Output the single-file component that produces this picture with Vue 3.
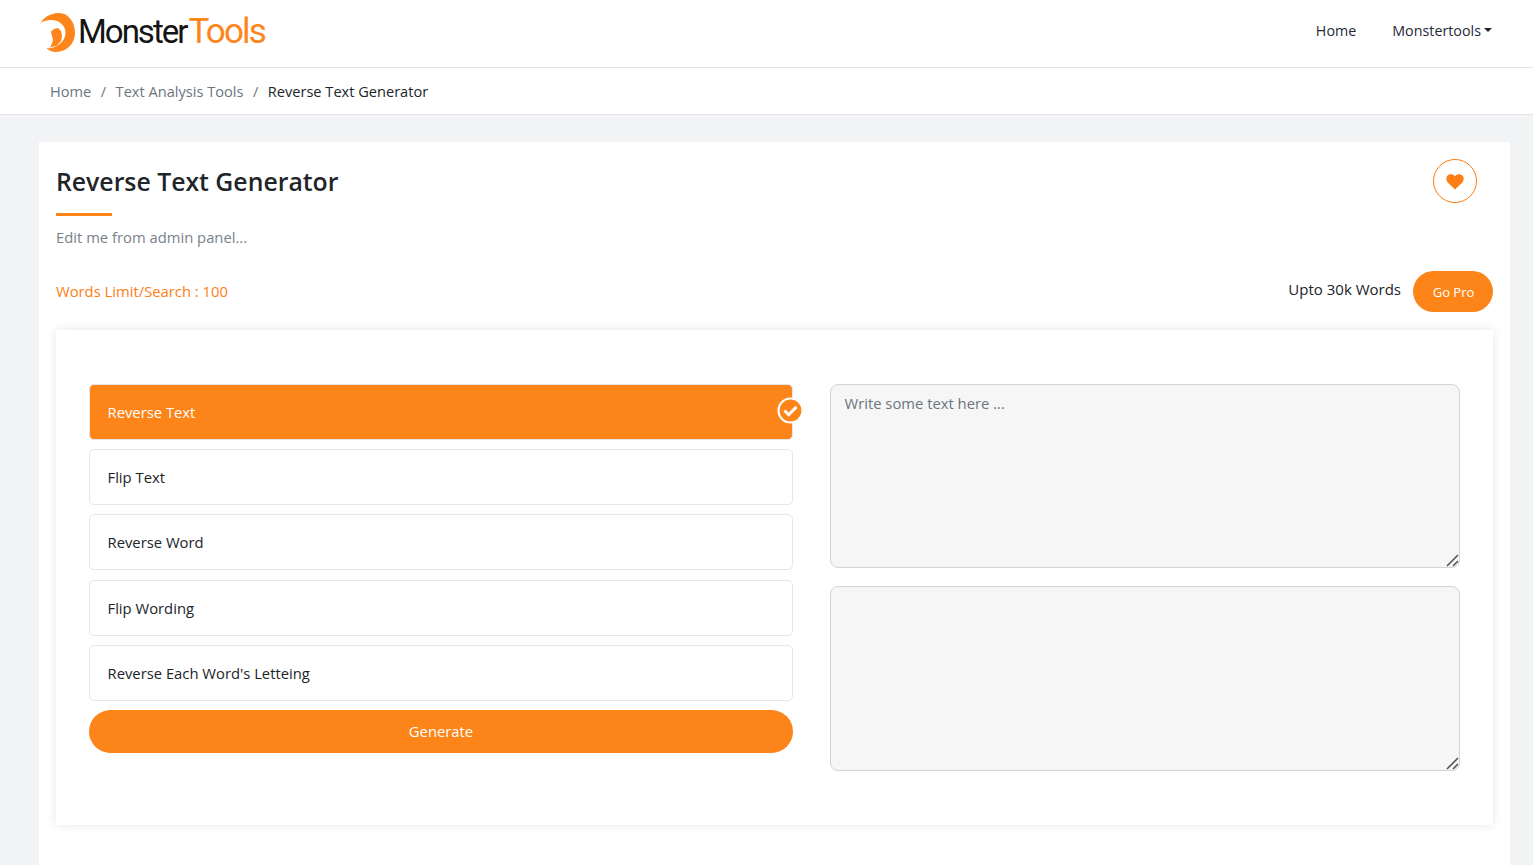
<script setup>
import { ref } from 'vue'
const options = ['Reverse Text', 'Flip Text', 'Reverse Word', 'Flip Wording', "Reverse Each Word's Letteing"]
const selected = ref(0)
</script>

<template>
  <div class="page">
    <header class="navbar">
      <a class="logo">
        <svg class="logo-mark" width="44" height="46" viewBox="0 0 44 46">
          <path fill="#fd851a" d="M3.500 14.500C7 8 14 3 23 3c9.500 0 16 9 16 20 0 10.500-8.500 19-19 19-4 0-7-1.500-9.500-4 4 .5 8-.5 11-2.500 5-3 8-7.500 8-13 0-7-6.500-12.500-14-12.500-4 0-8 1-11.500 3z"/>
          <path fill="#fd851a" d="M15 21.500l3-2.500 4-1 3 3 1 5-1 5-4 4.500-7 2 2-4 1-4-1-3.500z"/>
        </svg>
        <span class="logo-dark">Monster</span><span class="logo-orange">Tools</span>
      </a>
      <nav class="nav-links">
        <a>Home</a>
        <a class="dropdown">Monstertools<i class="caret"></i></a>
      </nav>
    </header>
    <div class="crumbs">
      <a>Home</a><span class="sep">/</span>
      <a>Text Analysis Tools</a><span class="sep">/</span>
      <span class="current">Reverse Text Generator</span>
    </div>
    <main class="content">
      <section class="card">
        <div class="title-row">
          <div>
            <h1>Reverse Text Generator</h1>
            <div class="rule"></div>
            <p class="muted">Edit me from admin panel...</p>
          </div>
          <button class="fav" aria-label="Favourite">
            <svg width="18" height="16" viewBox="0 0 18 16">
              <path fill="#fd7e14" d="M9 15.500 2 8.700C-.2 6.500-.2 3.300 1.600 1.600 3.500-.3 6.500-.2 8.200 1.500L9 2.300l.8-.8c1.700-1.700 4.700-1.800 6.600.1 1.800 1.700 1.800 4.900-.4 7.100z"/>
            </svg>
          </button>
        </div>
        <div class="limit-row">
          <span class="limit">Words Limit/Search : 100</span>
          <div class="pro">
            <span>Upto 30k Words</span>
            <button class="go-pro">Go Pro</button>
          </div>
        </div>
        <div class="tool">
          <div class="options">
            <div
              v-for="(o, i) in options"
              :key="o"
              class="option"
              :class="{ active: selected === i }"
              @click="selected = i"
            >
              {{ o }}
              <svg v-if="selected === i" class="check" width="27" height="27" viewBox="0 0 27 27">
                <circle cx="13.500" cy="13.500" r="12" fill="#fd8418" stroke="#fff" stroke-width="2.200"/>
                <path d="M7.500 13.500l4.200 4.200 7.800-7.800" fill="none" stroke="#fff" stroke-width="3"/>
              </svg>
            </div>
            <button class="generate">Generate</button>
          </div>
          <div class="areas">
            <div class="area">
              <textarea placeholder="Write some text here ..."></textarea>
              <svg class="grip" width="13" height="13" viewBox="0 0 13 13">
                <path d="M12 1 1 12M12 7 7 12" fill="none" stroke="#555" stroke-width="1.600"/>
              </svg>
            </div>
            <div class="area tall">
              <textarea></textarea>
              <svg class="grip" width="13" height="13" viewBox="0 0 13 13">
                <path d="M12 1 1 12M12 7 7 12" fill="none" stroke="#555" stroke-width="1.600"/>
              </svg>
            </div>
          </div>
        </div>
      </section>
    </main>
  </div>
</template>

<style>
html, body { margin: 0; }
</style>

<style scoped>
.page {
  height: 100vh;
  overflow: hidden;
  background: #f2f3f5;
  font-family: "Open Sans", "Noto Sans", sans-serif;
  font-size: 14.800px;
  color: #212529;
  display: flex;
  flex-direction: column;
}
.navbar {
  height: 67px;
  flex: none;
  background: #fff;
  border-bottom: 1px solid #e3e5e8;
  display: flex;
  align-items: center;
  justify-content: space-between;
  padding: 0 41px 0 36px;
}
.logo { display: flex; align-items: center; font-family: Roboto, sans-serif; line-height: 40px; margin-top: -4px; }
.logo-mark { margin-right: -2px; margin-top: 2px; }
.logo-dark { color: #141414; font-size: 33px; font-weight: 400; letter-spacing: -2px; }
.logo-orange { color: #fd851a; font-size: 35px; font-weight: 400; letter-spacing: -1.800px; margin-left: 2px; }
.nav-links { display: flex; gap: 36px; color: #1e2a38; font-size: 14.300px; font-weight: 500; margin-top: -7px; }
.dropdown { display: flex; align-items: center; }
.caret { width: 0; height: 0; margin-left: 3px; border-left: 4px solid transparent; border-right: 4px solid transparent; border-top: 4px solid #212529; }
.crumbs {
  height: 46px;
  flex: none;
  background: #fff;
  border-bottom: 1px solid #e3e5e8;
  display: flex;
  align-items: center;
  padding-left: 50px;
  color: #6c757d;
  font-size: 14.600px;
}
.sep { margin: 0 9.500px; }
.current { color: #212529; }
.content { flex: 1; min-height: 0; padding: 27px 23px 0 39px; }
.card {
  background: #fff;
  height: 100%;
  box-sizing: border-box;
  padding: 17px 17px 0;
}
.title-row { display: flex; justify-content: space-between; align-items: flex-start; }
h1 { margin: 3px 0 0; font-size: 24.800px; line-height: 39px; font-weight: 600; color: #212529; }
.rule { width: 56px; height: 3px; background: #fd851a; margin-top: 12px; }
.muted { margin: 10px 0 0; color: #7a828a; line-height: 22px; }
.fav {
  width: 44px; height: 44px;
  margin: 0 16px 0 0;
  border-radius: 50%;
  border: 1px solid #fd7e14;
  background: #fff;
  padding: 1px 0 0;
  display: flex; align-items: center; justify-content: center;
}
.limit-row { display: flex; justify-content: space-between; align-items: center; margin-top: 23px; }
.limit { color: #fd7e14; margin-top: -2px; }
.pro { display: flex; align-items: center; gap: 12px; color: #212529; font-size: 15px; }
.pro span { margin-top: -5px; }
.go-pro {
  width: 80px; height: 41px;
  border: 0;
  border-radius: 21px;
  background: #fd8418;
  color: #fff;
  font: inherit;
  font-size: 13px;
  padding: 1px 0 0 1px;
}
.tool {
  margin-top: 18px;
  padding: 54px 33px 54px;
  display: flex;
  gap: 37px;
  background: #fff;
  box-shadow: 0 0 10px rgba(0, 0, 0, .1);
}
.options { flex: none; width: 704px; display: flex; flex-direction: column; gap: 9.200px; }
.option {
  position: relative;
  height: 56px;
  box-sizing: border-box;
  border: 1px solid #e4e6e9;
  border-radius: 5px;
  padding-left: 17.500px;
  display: flex;
  align-items: center;
}
.option.active { background: #fd8418; color: #fff; }
.check { position: absolute; right: -12px; top: 12px; }
.generate {
  height: 43px;
  border: 0;
  border-radius: 22px;
  background: #fd8418;
  color: #fff;
  font: inherit;
}
.areas { flex: none; width: 630px; display: flex; flex-direction: column; gap: 18px; }
.area { position: relative; height: 184px; }
.area.tall { height: 185px; }
textarea {
  display: block;
  width: 100%;
  height: 100%;
  box-sizing: border-box;
  border: 1px solid #ced4da;
  border-radius: 8px;
  background: #f6f6f7;
  padding: 8px 13.500px;
  font: inherit;
  color: #495057;
  outline: none;
  resize: none;
}
textarea::placeholder { color: #6c757d; opacity: 1; }
.grip { position: absolute; right: 1px; bottom: 1px; pointer-events: none; }
</style>
